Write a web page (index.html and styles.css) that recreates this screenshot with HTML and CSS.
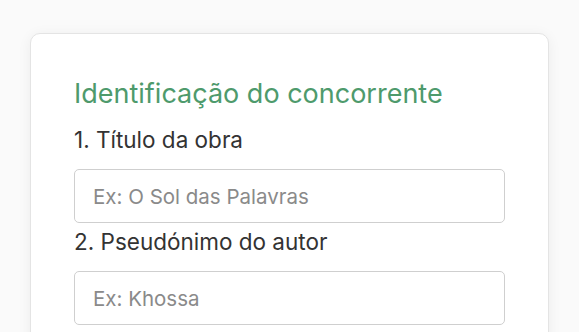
FILE: index.html
```html
<!DOCTYPE html>
<html lang="pt">
<head>
    <meta charset="UTF-8">
    <meta name="viewport" content="width=device-width, initial-scale=1.0">
    <title>Identificação do concorrente</title>
    <link rel="stylesheet" href="styles.css">
</head>
<body>
    <div class="card">
        <h2 class="card-title">Identificação do concorrente</h2>

        <div class="form-group">
            <label for="titulo">1. Título da obra</label>
            <input type="text" id="titulo" placeholder="Ex: O Sol das Palavras">
        </div>

        <div class="form-group">
            <label for="pseudonimo">2. Pseudónimo do autor</label>
            <input type="text" id="pseudonimo" placeholder="Ex: Khossa">
        </div>
    </div>
</body>
</html>
```

FILE: styles.css
```css
body {
    margin: 0;
    padding: 33px 30px 0 30px;
    background-color: #fafafa;
    font-family: Inter, "Noto Sans", sans-serif;
    color: #333;
}
.card {
    background: #fff;
    border: 1px solid #e4e4e4;
    border-radius: 10px;
    box-shadow: 0 2px 14px rgba(0, 0, 0, 0.06);
    padding: 44px 43px 40px 43px;
}
.card-title {
    margin: 0 0 17px 0;
    font-size: 27px;
    font-weight: 400;
    color: #4e9a6c;
    line-height: 32px;
}
.form-group {
    margin-bottom: 6px;
}
label {
    display: block;
    font-size: 22.5px;
    line-height: 26px;
    margin-bottom: 16px;
}
input {
    display: block;
    width: 100%;
    height: 54px;
    padding: 0 18px;
    border: 1px solid #cfcfcf;
    border-radius: 5px;
    box-sizing: border-box;
    font-family: inherit;
    font-size: 20.5px;
    color: #333;
}
input::placeholder {
    color: #8a8a8a;
}
```
